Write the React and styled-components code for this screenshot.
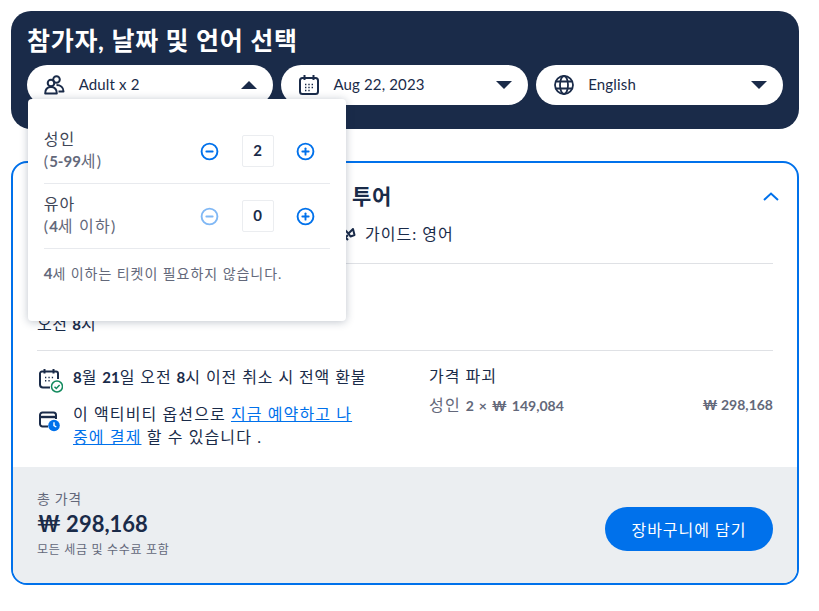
import React from "react";
import styled, { createGlobalStyle } from "styled-components";
import { CircleMinus, CirclePlus } from "lucide-react";

const navy = "#1a2b49";
const blue = "#0071eb";
const gray = "#63687a";

const GlobalStyle = createGlobalStyle`
	* {
		box-sizing: border-box;
	}
	body {
		margin: 0;
		background: #fff;
		color: ${navy};
		font-family: "Lato", "Noto Sans CJK KR", sans-serif;
	}
`;

const PeopleIcon = () => (
	<svg width="21" height="20" viewBox="0 0 21 20" fill="none" stroke={navy} strokeWidth="2">
		<circle cx="12.500" cy="4.500" r="3.300" />
		<circle cx="7" cy="8" r="3.300" />
		<path d="M1.200 18.500c0-4 2.300-6.500 5.800-6.500s5.800 2.500 5.800 6.500z" strokeLinejoin="round" />
		<path d="M12.500 10c4 0 7 2.500 7 6.500h-5" strokeLinejoin="round" />
	</svg>
);

const CalendarIcon = () => (
	<svg width="20" height="20" viewBox="0 0 20 20" fill="none" stroke={navy} strokeWidth="2">
		<rect x="1" y="3" width="18" height="16" rx="2.500" />
		<path d="M5.500 0v5M14.500 0v5" />
		<path d="M6 9.500h1.400M9.300 9.500h1.400M12.600 9.500h1.400M6 12.500h1.400M9.300 12.500h1.400M12.600 12.500h1.400M6 15.500h1.400M9.300 15.500h1.400" strokeWidth="1.400" />
	</svg>
);

const GlobeIcon = () => (
	<svg width="20" height="20" viewBox="0 0 20 20" fill="none" stroke={navy} strokeWidth="1.800">
		<circle cx="10" cy="10" r="9" />
		<ellipse cx="10" cy="10" rx="4" ry="9" />
		<path d="M1.800 6.500h16.400M1.800 13.500h16.400" />
	</svg>
);

const CalendarCheckIcon = () => (
	<svg width="24" height="25" viewBox="0 0 24 25" fill="none">
		<path d="M11 19.500H4a3 3 0 0 1-3-3V5.500a2 2 0 0 1 2-2h14a2 2 0 0 1 2 2V11" stroke={navy} strokeWidth="2" />
		<path d="M5.500 1v4.500M14.500 1v4.500" stroke={navy} strokeWidth="2" />
		<path d="M6 9.500h1.300M9.400 9.500h1.300M12.800 9.500h1.300M6 12.800h1.300M9.400 12.800h1.300" stroke={navy} strokeWidth="1.400" />
		<circle cx="18" cy="18.500" r="5.500" fill="#fff" stroke="#138a5e" strokeWidth="1.500" />
		<path d="M15.500 18.700l1.800 1.800 3.300-3.500" stroke="#138a5e" strokeWidth="1.500" />
	</svg>
);

const PayLaterIcon = () => (
	<svg width="21" height="21" viewBox="0 0 21 21" fill="none">
		<path d="M9 15.500H3.500a2.500 2.500 0 0 1-2.500-2.500V4a2.500 2.500 0 0 1 2.500-2.500h11A2.500 2.500 0 0 1 17 4v4" stroke={navy} strokeWidth="2" />
		<path d="M1 6h16" stroke={navy} strokeWidth="2.400" />
		<circle cx="15" cy="14.500" r="5.800" fill={blue} />
		<path d="M15 11.200v3.500l2.300 1.300" stroke="#fff" strokeWidth="1.400" />
	</svg>
);

const GuideIcon = () => (
	<svg width="18" height="18" viewBox="0 0 18 18" fill="none" stroke={navy} strokeWidth="2">
		<path d="M3 3l7 7" />
		<path d="M14 5l-4.500 4.500 2 3 4-1.500z" strokeLinejoin="round" />
		<path d="M9 11l-2.500 2.500 2.500 2.500" />
	</svg>
);

const CollapseIcon = () => (
	<CollapseSvg viewBox="0 0 16 9" fill="none" stroke={blue} strokeWidth="2">
		<path d="M1 8l7-6.500L15 8" />
	</CollapseSvg>
);

const Arrow = ({ up }) => (
	<ArrowSvg viewBox="0 0 16 8">
		<path d={up ? "M0 8L8 0l8 8z" : "M0 0h16L8 8z"} fill={navy} />
	</ArrowSvg>
);

const Selector = ({ icon, label, up, children }) => (
	<Pill>
		<PillIcon>{icon}</PillIcon>
		<PillLabel>{label}</PillLabel>
		<Arrow up={up} />
		{children}
	</Pill>
);

const Counter = ({ name, range, count, minusOff }) => (
	<CounterRow>
		<CounterText>
			<CounterName>{name}</CounterName>
			<CounterRange>{range}</CounterRange>
		</CounterText>
		<Stepper>
			<StepButton $off={minusOff}>
				<CircleMinus size={19} strokeWidth={2.4} />
			</StepButton>
			<CountBox>{count}</CountBox>
			<StepButton>
				<CirclePlus size={19} strokeWidth={2.4} />
			</StepButton>
		</Stepper>
	</CounterRow>
);

const App = () => {
	return (
		<Page>
			<GlobalStyle />
			<Picker>
				<PickerTitle>참가자, 날짜 및 언어 선택</PickerTitle>
				<PickerRow>
					<Selector icon={<PeopleIcon />} label="Adult x 2" up>
						<Dropdown>
							<Counter
								name="성인"
								range={<>(<Num>5-99</Num>세)</>}
								count="2"
							/>
							<Counter
								name="유아"
								range={<>(<Num>4</Num>세 이하)</>}
								count="0"
								minusOff
							/>
							<DropdownNote>
								<Num>4</Num>세 이하는 티켓이 필요하지 않습니다.
							</DropdownNote>
						</Dropdown>
					</Selector>
					<Selector icon={<CalendarIcon />} label="Aug 22, 2023" />
					<Selector icon={<GlobeIcon />} label="English" />
				</PickerRow>
			</Picker>

			<Card>
				<CardBody>
					<TitleRow>
						<CardTitle>서울 도심 내 반나절 프라이빗 워킹 투어</CardTitle>
						<CollapseIcon />
					</TitleRow>
					<MetaRow>
						<MetaHidden>소요 시간: 4시간</MetaHidden>
						<MetaItem>
							<GuideIcon />
							가이드: 영어
						</MetaItem>
					</MetaRow>
					<Schedule>
						<div>시작 시간</div>
						<div>
							오전 <Num>8</Num>시
						</div>
					</Schedule>
					<Details>
						<Policies>
							<Policy>
								<PolicyIcon>
									<CalendarCheckIcon />
								</PolicyIcon>
								<span>
									<Num>8</Num>월 <Num>21</Num>일 오전 <Num>8</Num>시 이전 취소 시 전액 환불
								</span>
							</Policy>
							<Policy>
								<PolicyIcon $lower>
									<PayLaterIcon />
								</PolicyIcon>
								<PolicyText>
									이 액티비티 옵션으로 <a href="#pay">지금 예약하고 나중에 결제</a> 할 수 있습니다 .
								</PolicyText>
							</Policy>
						</Policies>
						<Breakdown>
							<BreakdownTitle>가격 파괴</BreakdownTitle>
							<BreakdownLine>
								<PerPerson>
									<Hangul>성인</Hangul> 2 × ₩ 149,084
								</PerPerson>
								<span>₩ 298,168</span>
							</BreakdownLine>
						</Breakdown>
					</Details>
				</CardBody>
				<Footer>
					<TotalBlock>
						<TotalLabel>총 가격</TotalLabel>
						<TotalPrice>₩ 298,168</TotalPrice>
						<TotalNote>모든 세금 및 수수료 포함</TotalNote>
					</TotalBlock>
					<CartButton>장바구니에 담기</CartButton>
				</Footer>
			</Card>
		</Page>
	);
};

const Num = styled.b`
	font-size: 15px;
	font-weight: 700;
	letter-spacing: 0;
`;
const Hangul = styled.span`
	font-size: 16px;
	font-weight: 400;
	letter-spacing: 1.2px;
`;
const Page = styled.div`
	width: 819px;
	padding: 11px 20px 26px 11px;
`;
const Picker = styled.section`
	height: 118px;
	padding: 12px 16px 24px;
	border-radius: 20px;
	background: ${navy};
`;
const PickerTitle = styled.h2`
	margin: 0 0 8px;
	font-size: 25px;
	line-height: 34px;
	font-weight: 700;
	letter-spacing: 0.7px;
	color: #fff;
`;
const PickerRow = styled.div`
	display: flex;
	gap: 8px;
	margin-left: -0.33px;
`;
const Pill = styled.div`
	position: relative;
	flex: 1;
	display: flex;
	align-items: center;
	height: 40px;
	padding: 0 16px 0 17px;
	border-radius: 20px;
	background: #fff;
`;
const PillIcon = styled.span`
	display: flex;
	justify-content: center;
	width: 22px;
	margin-right: 13px;
`;
const PillLabel = styled.span`
	flex: 1;
	margin-top: -2px;
	font-size: 15px;
	letter-spacing: 0.15px;
`;
const ArrowSvg = styled.svg`
	width: 16px;
	height: 8px;
`;
const Dropdown = styled.div`
	position: absolute;
	top: 34px;
	left: 1px;
	z-index: 5;
	width: 318px;
	height: 222px;
	padding: 20px 16px 0;
	border-radius: 4px;
	background: #fff;
	box-shadow: 0 1px 8px rgba(26, 43, 73, 0.28);
`;
const CounterRow = styled.div`
	display: flex;
	align-items: center;
	justify-content: space-between;
	height: 65px;
	padding-right: 14.5px;
	border-bottom: 1px solid #e8eaee;
`;
const CounterText = styled.div`
	margin-bottom: 2px;
`;
const CounterName = styled.div`
	font-size: 16px;
	line-height: 22px;
	letter-spacing: 1.2px;
	color: #3f4657;
`;
const CounterRange = styled.div`
	font-size: 16px;
	line-height: 22px;
	letter-spacing: 1.2px;
	color: ${gray};
`;
const Stepper = styled.div`
	display: flex;
	align-items: center;
`;
const StepButton = styled.span`
	display: flex;
	color: ${(props) => (props.$off ? "#80b8f5" : blue)};
`;
const CountBox = styled.span`
	display: flex;
	align-items: center;
	justify-content: center;
	width: 32px;
	height: 32px;
	margin: 0 22.5px;
	padding-bottom: 2px;
	border: 1px solid #ebedf0;
	border-radius: 2px;
	font-size: 15px;
	font-weight: 700;
`;
const DropdownNote = styled.p`
	margin: 14px 0 0;
	font-size: 14px;
	line-height: 20px;
	letter-spacing: 0.95px;
	color: ${gray};
`;
const Card = styled.section`
	margin-top: 32px;
	height: 424px;
	border: 2px solid ${blue};
	border-radius: 16px;
	overflow: hidden;
`;
const CardBody = styled.div`
	height: 304px;
	padding: 19px 24px 0;
`;
const TitleRow = styled.div`
	display: flex;
	align-items: center;
	justify-content: space-between;
	height: 28px;
`;
const CardTitle = styled.h3`
	margin: 0;
	font-size: 21px;
	line-height: 28px;
	font-weight: 700;
	letter-spacing: 0.7px;
	white-space: nowrap;
`;
const CollapseSvg = styled.svg`
	width: 16px;
	height: 9px;
	margin-right: -6px;
`;
const MetaRow = styled.div`
	display: flex;
	align-items: center;
	height: 22px;
	margin-top: 12px;
	font-size: 16px;
	letter-spacing: 1px;
`;
const MetaHidden = styled.span`
	width: 302px;
`;
const MetaItem = styled.span`
	display: flex;
	align-items: center;
	gap: 8px;
`;
const Schedule = styled.div`
	margin-top: 19px;
	height: 88px;
	padding-top: 27px;
	border-top: 1px solid #dfe1e5;
	border-bottom: 1px solid #dfe1e5;
	font-size: 16px;
	line-height: 22px;
	letter-spacing: 0.6px;
`;
const Details = styled.div`
	display: flex;
	padding-top: 14px;
`;
const Policies = styled.div`
	display: flex;
	flex-direction: column;
	gap: 9px;
	width: 392px;
`;
const Policy = styled.div`
	display: flex;
	font-size: 16px;
	line-height: 23px;
	letter-spacing: 0.9px;
`;
const PolicyIcon = styled.span`
	display: flex;
	flex: none;
	width: 36px;
	padding: ${(props) => (props.$lower ? "9px 0 0 2px" : "3px 0 0 2px")};
`;
const PolicyText = styled.span`
	width: 284px;
	letter-spacing: 1.1px;
	word-break: break-all;
	a {
		color: ${blue};
	}
`;
const Breakdown = styled.div`
	flex: 1;
`;
const BreakdownTitle = styled.div`
	font-size: 16px;
	line-height: 22px;
	letter-spacing: 1px;
`;
const BreakdownLine = styled.div`
	display: flex;
	justify-content: space-between;
	margin-top: 7px;
	font-size: 14px;
	line-height: 22px;
	font-weight: 700;
	color: ${gray};
`;
const PerPerson = styled.span`
	word-spacing: 1.5px;
`;
const Footer = styled.div`
	display: flex;
	align-items: center;
	justify-content: space-between;
	height: 116px;
	padding: 0 24px;
	background: #ebeef1;
`;
const TotalBlock = styled.div`
	padding-bottom: 2px;
`;
const TotalLabel = styled.div`
	font-size: 14px;
	line-height: 18px;
	letter-spacing: 0.6px;
	color: ${gray};
`;
const TotalPrice = styled.div`
	margin-top: 1px;
	font-size: 22px;
	line-height: 30px;
	font-weight: 700;
`;
const TotalNote = styled.div`
	margin-top: 2px;
	font-size: 12px;
	line-height: 18px;
	letter-spacing: 0.7px;
	color: ${gray};
`;
const CartButton = styled.button`
	width: 168px;
	height: 44px;
	margin-top: 8px;
	border: 0;
	border-radius: 22px;
	background: ${blue};
	color: #fff;
	font-family: inherit;
	font-size: 16px;
	letter-spacing: 1px;
`;

export default App;
